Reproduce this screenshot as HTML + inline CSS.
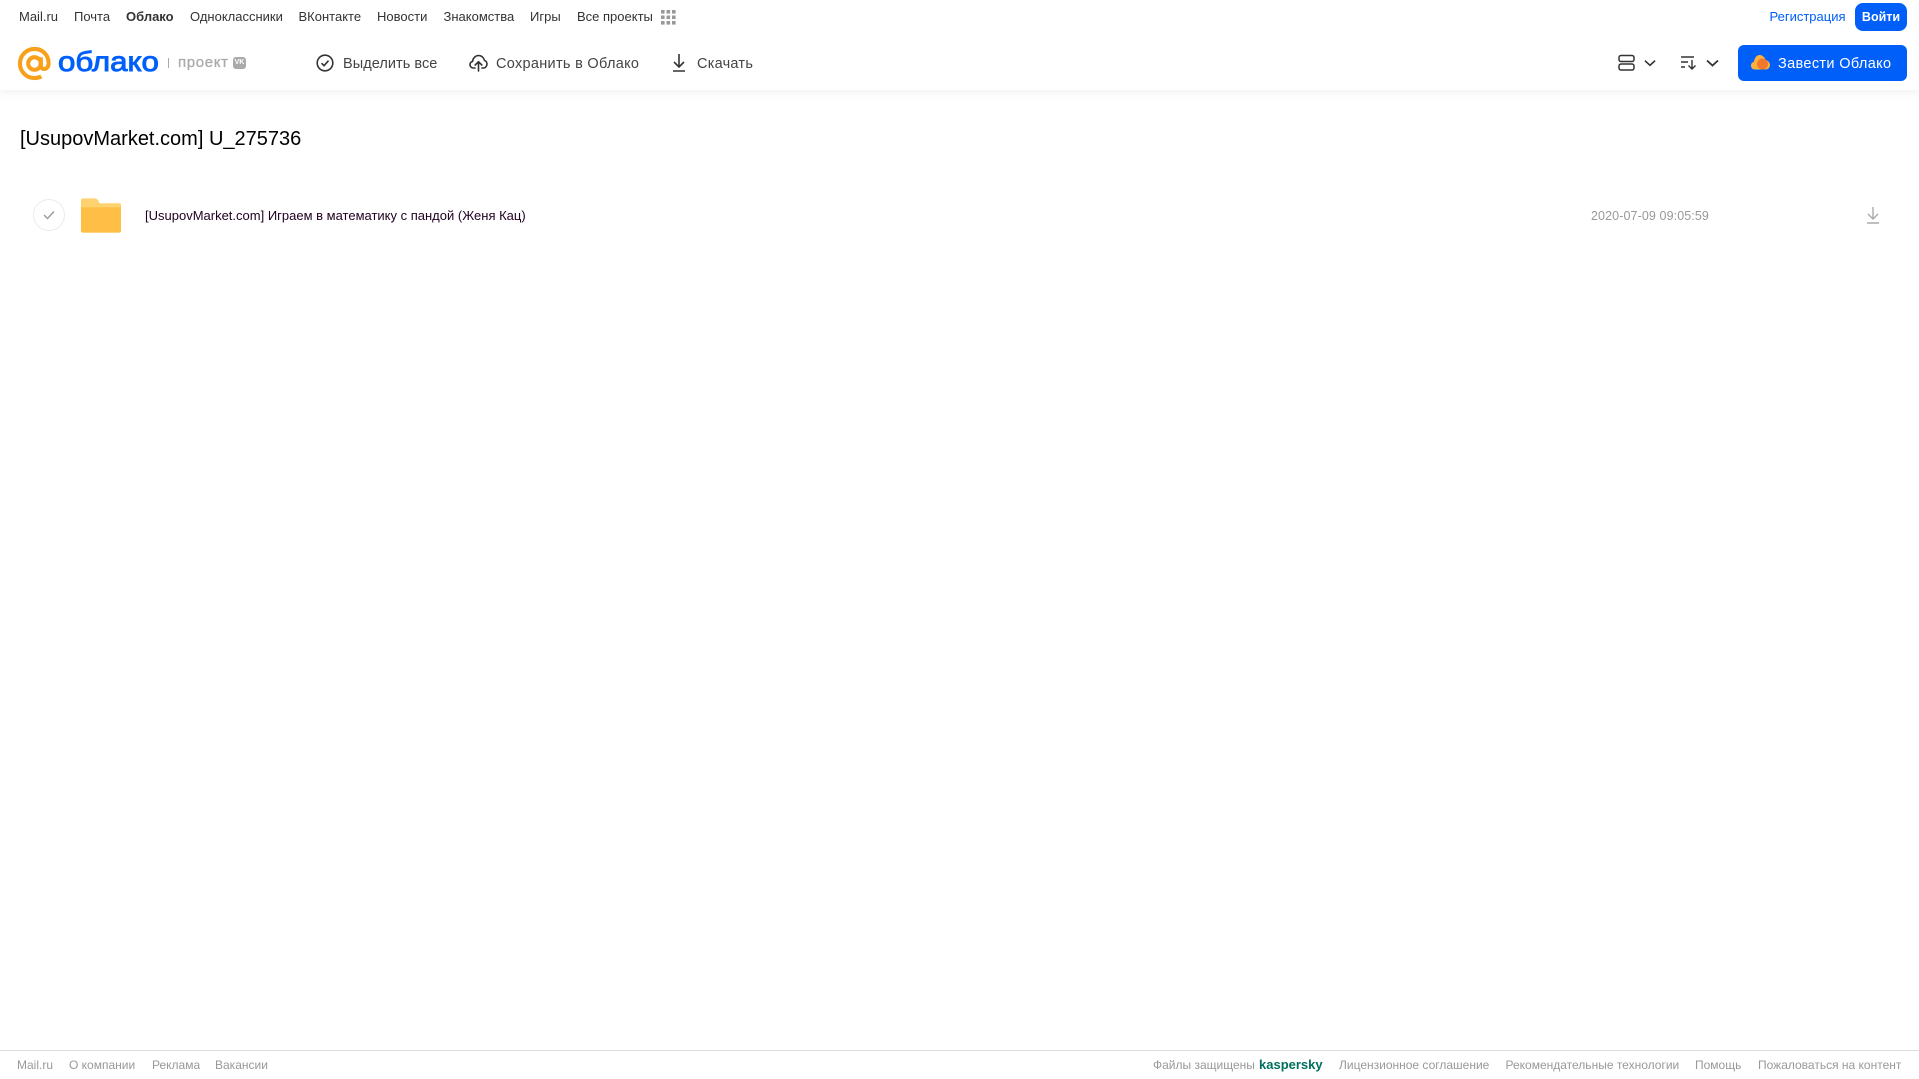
<!DOCTYPE html>
<html lang="ru"><head><meta charset="utf-8"><title>Облако</title>
<style>
html,body{margin:0;padding:0;background:#fff}
body{width:1919px;height:1079px;position:relative;overflow:hidden;font-family:"Liberation Sans",sans-serif;color:#333}
.t{position:absolute;white-space:nowrap;line-height:20px}
.n{top:7px;font-size:13px;color:#333}
.a{top:53.5px;font-size:14.5px;color:#444;letter-spacing:.3px}
.f{top:1055px;font-size:12px;color:#999}
svg{position:absolute;overflow:visible}
#hdr{position:absolute;left:0;top:0;width:1919px;height:90px;background:#fff;box-shadow:0 2px 10px rgba(0,0,0,.07)}
</style></head><body>
<div id="hdr"></div>
<span class="t n" style="left:19px">Mail.ru</span>
<span class="t n" style="left:74px">Почта</span>
<span class="t n" style="left:126px;font-weight:bold">Облако</span>
<span class="t n" style="left:190px">Одноклассники</span>
<span class="t n" style="left:298.5px">ВКонтакте</span>
<span class="t n" style="left:377px">Новости</span>
<span class="t n" style="left:443.5px">Знакомства</span>
<span class="t n" style="left:530px">Игры</span>
<span class="t n" style="left:577px">Все проекты</span>
<svg style="left:661px;top:10px" width="15" height="15" fill="#999"><rect x="0" y="0" width="3.6" height="3.6"/><rect x="5.5" y="0" width="3.6" height="3.6"/><rect x="11" y="0" width="3.6" height="3.6"/><rect x="0" y="5.5" width="3.6" height="3.6"/><rect x="5.5" y="5.5" width="3.6" height="3.6"/><rect x="11" y="5.5" width="3.6" height="3.6"/><rect x="0" y="11" width="3.6" height="3.6"/><rect x="5.5" y="11" width="3.6" height="3.6"/><rect x="11" y="11" width="3.6" height="3.6"/></svg>
<span class="t n" style="left:1769.5px;color:#005ff9">Регистрация</span>
<div style="position:absolute;left:1855px;top:3px;width:52px;height:28px;background:#005ff9;border-radius:8px;color:#fff;font-size:12.5px;font-weight:bold;line-height:28px;text-align:center">Войти</div>

<svg style="left:18px;top:46.500px" width="33" height="33" viewBox="0 0 34 34" fill="none" stroke="#f9a01b" stroke-width="4.200"><circle cx="17" cy="17" r="6.500"/><path d="M23.500 10.500V19c0 5 7.500 5 8-1.500C32 8 25 2 17 2 8.700 2 2 8.700 2 17s6.700 15 15 15c2.600 0 4.800-.5 7-1.700"/></svg>
<span class="t" style="left:57.500px;top:44px;line-height:36px;font-size:28px;color:#005ff9;-webkit-text-stroke:.9px #005ff9;transform:scaleX(1.116);transform-origin:0 50%">облако</span>
<div style="position:absolute;left:168px;top:58px;width:1px;height:10px;background:#aaa"></div>
<span class="t" style="left:178px;top:53px;font-size:15px;color:#aaa;letter-spacing:.65px;-webkit-text-stroke:.3px #aaa">проект</span>
<div style="position:absolute;left:233px;top:57px;width:13px;height:12px;background:#aaa;border-radius:3px;color:#fff;font-size:7px;font-weight:bold;line-height:12px;text-align:center">VK</div>

<svg style="left:316px;top:54px" width="18" height="18" viewBox="0 0 18 18" fill="none" stroke="#333" stroke-width="1.600"><circle cx="9" cy="9" r="7.800"/><path d="M5.500 9.200l2.500 2.500 4.500-5"/></svg>
<span class="t a" style="left:343px;letter-spacing:.05px">Выделить все</span>
<svg style="left:469px;top:54px" width="19" height="18" viewBox="0 0 19 18" fill="none" stroke="#333" stroke-width="1.600" stroke-linejoin="round" stroke-linecap="round"><path d="M6 14H4.500C2.500 14 1 12.500 1 10.700c0-1.500 1-2.800 2.500-3.200C4 4 6.500 1.500 9.500 1.500c3 0 5.400 2.200 6 5 1.500.4 2.500 2 2.500 3.500 0 2-1.500 4-3.500 4H13"/><path d="M9.500 17V8M6.200 11l3.300-3.300 3.300 3.300"/></svg>
<span class="t a" style="left:496px">Сохранить в Облако</span>
<svg style="left:671px;top:54px" width="16" height="18" viewBox="0 0 16 18" fill="none" stroke="#333" stroke-width="1.600"><path d="M8 0v13M3 8l5 5 5-5M2 17h12"/></svg>
<span class="t a" style="left:697px;letter-spacing:.25px">Скачать</span>

<svg style="left:1618px;top:54px" width="18" height="18" viewBox="0 0 18 18" fill="none" stroke="#333" stroke-width="1.500"><rect x="1" y="1.500" width="15" height="6" rx="2"/><rect x="1" y="10" width="15" height="6" rx="2"/></svg>
<svg style="left:1644px;top:59px" width="12" height="8" viewBox="0 0 13 8" fill="none" stroke="#333" stroke-width="1.800"><path d="M1 1.500l5.500 5 5.500-5"/></svg>
<svg style="left:1681px;top:55px" width="17" height="16" viewBox="0 0 17 16" fill="none" stroke="#333" stroke-width="1.400"><path d="M0 2h13M0 7h7M0 12h4M11 5v9M7.500 10.500L11 14l3.500-3.500"/></svg>
<svg style="left:1706px;top:59px" width="13" height="8" viewBox="0 0 13 8" fill="none" stroke="#333" stroke-width="1.800"><path d="M1 1.500l5.500 5 5.500-5"/></svg>

<div style="position:absolute;left:1738px;top:45px;width:169px;height:36px;background:#005ff9;border-radius:6px"></div>
<svg style="left:1751px;top:54px" width="19" height="17" viewBox="0 0 19 17"><path d="M4 15.500C1.500 15.500 0 13.800 0 11.500 0 9.500 1.500 8 3 7.800 3.500 3.500 6 1 8.500 1c3 0 5.500 2.500 6 5 2.500.5 4.500 2.500 4.500 5 0 2.500-2 4.500-4.500 4.500z" fill="#fbb13c"/><circle cx="11.500" cy="10" r="5.500" fill="#f4772e"/></svg>
<span class="t a" style="left:1778px;color:#fff;letter-spacing:.35px">Завести Облако</span>

<span class="t" style="left:20px;top:126px;line-height:26px;font-size:20px;color:#000">[UsupovMarket.com] U_275736</span>

<div style="position:absolute;left:33px;top:199px;width:30px;height:30px;border:1px solid #ececec;border-radius:50%"></div>
<svg style="left:43px;top:210px" width="12" height="10" viewBox="0 0 12 10" fill="none" stroke="#999" stroke-width="1.400"><path d="M1 5l3.500 3.500L11 1.500"/></svg>
<svg style="left:81px;top:198px" width="40" height="35" viewBox="0 0 41 35"><path d="M2 0h12c2 0 3 1 4 3l1 2h20a2 2 0 0 1 2 2v26a2 2 0 0 1-2 2H2a2 2 0 0 1-2-2V2a2 2 0 0 1 2-2z" fill="#ffd270"/><path d="M0 9h39a2 2 0 0 1 2 0v24a2 2 0 0 1-2 2H2a2 2 0 0 1-2-2z" fill="#ffbe45"/></svg>
<span class="t" style="left:145px;top:206px;font-size:13px;color:#200020">[UsupovMarket.com] Играем в математику с пандой (Женя Кац)</span>
<span class="t" style="left:1591px;top:206px;font-size:12.500px;color:#999;letter-spacing:.1px">2020-07-09 09:05:59</span>
<svg style="left:1866px;top:207px" width="14" height="17" viewBox="0 0 14 17" fill="none" stroke="#aaa" stroke-width="1.400"><path d="M7 0v12M2 7l5 5 5-5M1 16h12"/></svg>

<div style="position:absolute;left:0;top:1050px;width:1919px;height:1px;background:#ddd"></div>
<span class="t f" style="left:17px">Mail.ru</span>
<span class="t f" style="left:69px">О компании</span>
<span class="t f" style="left:152px">Реклама</span>
<span class="t f" style="left:215px">Вакансии</span>
<span class="t f" style="left:1153px">Файлы защищены</span>
<span class="t f" style="left:1259px;font-size:13px;font-weight:bold;color:#00705c">kaspersky</span>
<span class="t f" style="left:1339px">Лицензионное соглашение</span>
<span class="t f" style="left:1505.500px">Рекомендательные технологии</span>
<span class="t f" style="left:1695px">Помощь</span>
<span class="t f" style="left:1758px">Пожаловаться на контент</span>
</body></html>
